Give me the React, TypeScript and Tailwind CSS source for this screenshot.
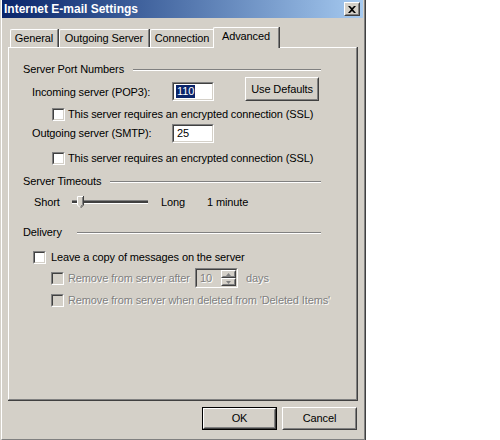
import React from 'react';

const Checkbox: React.FC<{ disabled?: boolean }> = ({ disabled }) => (
  <div className="flex h-[13px] w-[13px] shrink-0 border border-t-[#808080] border-l-[#808080] border-r-white border-b-white">
    <div
      className={`flex-1 border border-t-[#404040] border-l-[#404040] border-r-[#d4d0c8] border-b-[#d4d0c8] ${
        disabled ? 'bg-[#d4d0c8]' : 'bg-white'
      }`}
    />
  </div>
);

const Sunken: React.FC<{ className?: string; children?: React.ReactNode; inner?: string }> = ({ className, children, inner }) => (
  <div className={`flex border border-t-[#808080] border-l-[#808080] border-r-white border-b-white ${className || ''}`}>
    <div className={`flex flex-1 items-center border border-t-[#404040] border-l-[#404040] border-r-[#d4d0c8] border-b-[#d4d0c8] ${inner || 'bg-white'}`}>
      {children}
    </div>
  </div>
);

const Raised: React.FC<{ className?: string; children?: React.ReactNode }> = ({ className, children }) => (
  <div className={`flex border border-t-white border-l-white border-r-[#404040] border-b-[#404040] ${className || ''}`}>
    <div className="flex flex-1 items-center justify-center border border-t-[#d4d0c8] border-l-[#d4d0c8] border-r-[#808080] border-b-[#808080]">
      {children}
    </div>
  </div>
);

const GroupHeader: React.FC<{ label: string; labelWidth: string }> = ({ label, labelWidth }) => (
  <div className="ml-[14px] mr-[35px] flex h-[13px] items-center">
    <span className={`${labelWidth} shrink-0 whitespace-nowrap`}>{label}</span>
    <div className="h-[2px] flex-1 border-t border-t-[#808080] border-b border-b-white" />
  </div>
);

const Dim: React.FC<{ children: React.ReactNode; className?: string }> = ({ children, className }) => (
  <span className={`whitespace-nowrap text-[#808080] [text-shadow:1px_1px_0_#ffffff] ${className || ''}`}>{children}</span>
);

const tabs = ['General', 'Outgoing Server', 'Connection'];
const tabWidths = ['w-[49px]', 'w-[91px]', 'w-[65px]'];

export default function App() {
  return (
    <div className="h-[440px] w-[500px] bg-white font-['Liberation_Sans',Arial,sans-serif] text-[11px] leading-[13px] tracking-[-0.12px] text-black">
      <div className="flex h-[440px] w-[366px] border-r border-r-[#404040] bg-[#d4d0c8] pl-[1px]">
        <div className="flex flex-1 flex-col border-l border-l-white border-r border-r-[#808080] border-b border-b-[#808080]">
          {/* title bar */}
          <div className="mr-[1px] flex h-[18px] items-center bg-gradient-to-r from-[#0a246a] to-[#a6caf0] pl-[2px] pr-[3px]">
            <span className="flex-1 text-[12px] font-bold tracking-[0px] text-white">Internet E-mail Settings</span>
            <Raised className="h-[14px] w-[16px] bg-[#d4d0c8]">
              <svg width="8" height="7" viewBox="0 0 8 7">
                <path d="M0 0h2l2 2 2-2h2L5 3.5 8 7H6L4 5 2 7H0l3-3.5z" fill="#000" />
              </svg>
            </Raised>
          </div>

          {/* tabs */}
          <div className="ml-[8px] mt-[9px] flex h-[20px] items-end">
            {tabs.map((t, i) => (
              <div key={t} className={`${tabWidths[i]} flex h-[18px] rounded-tl-[2px] border-r border-r-[#404040]`}>
                <div className="flex flex-1 items-center justify-center rounded-tl-[2px] border-l border-t border-l-white border-t-white border-r border-r-[#808080] pb-[1px]">
                  {t}
                </div>
              </div>
            ))}
            <div className="relative z-10 -mx-[2px] -mb-[1px] flex h-[21px] w-[67px] rounded-tl-[2px] border-r border-r-[#404040] bg-[#d4d0c8]">
              <div className="flex flex-1 items-start justify-center rounded-tl-[2px] border-l border-t border-l-white border-t-white border-r border-r-[#808080] pt-[2px]">
                Advanced
              </div>
            </div>
          </div>

          {/* panel */}
          <div className="ml-[6px] flex h-[354px] w-[350px] border-r border-b border-r-[#404040] border-b-[#404040]">
            <div className="flex flex-1 flex-col border-l border-t border-l-white border-t-white border-r border-b border-r-[#808080] border-b-[#808080]">
              <div className="mt-[15px]">
                <GroupHeader label="Server Port Numbers" labelWidth="w-[110px]" />
              </div>

              <div className="mt-[1px] flex h-[24px] items-start">
                <span className="ml-[23px] mt-[9px] w-[140px] whitespace-nowrap">Incoming server (POP3):</span>
                <Sunken className="mt-[5px] h-[19px] w-[42px]">
                  <span className="ml-[2px] bg-[#0a246a] px-[1px] text-white">110</span>
                </Sunken>
                <Raised className="ml-[31px] h-[24px] w-[74px]">Use Defaults</Raised>
              </div>

              <div className="ml-[43px] mt-[7px] flex h-[13px] items-center">
                <Checkbox />
                <span className="ml-[3px] whitespace-nowrap">This server requires an encrypted connection (SSL)</span>
              </div>

              <div className="mt-[3px] flex h-[19px] items-start">
                <span className="ml-[23px] mt-[3px] w-[140px] whitespace-nowrap">Outgoing server (SMTP):</span>
                <Sunken className="h-[19px] w-[42px]">
                  <span className="ml-[3px]">25</span>
                </Sunken>
              </div>

              <div className="ml-[43px] mt-[9px] flex h-[13px] items-center">
                <Checkbox />
                <span className="ml-[3px] whitespace-nowrap">This server requires an encrypted connection (SSL)</span>
              </div>

              <div className="mt-[10px]">
                <GroupHeader label="Server Timeouts" labelWidth="w-[87px]" />
              </div>

              <div className="mt-[6px] flex h-[16px] items-center">
                <span className="ml-[25px] w-[36px]">Short</span>
                <svg width="80" height="16" viewBox="0 0 80 16" className="shrink-0">
                  <rect x="2" y="6" width="76" height="1" fill="#808080" />
                  <rect x="2" y="7" width="76" height="2" fill="#404040" />
                  <rect x="2" y="9" width="76" height="1" fill="#ffffff" />
                  <polygon points="7.5,2.5 13.5,2.5 13.5,11 10.5,14 7.5,11" fill="#d4d0c8" />
                  <polyline points="7.5,11 7.5,2.5 13,2.5" fill="none" stroke="#ffffff" strokeWidth="1" />
                  <polyline points="13.5,2 13.5,11 10.5,14" fill="none" stroke="#404040" strokeWidth="1" />
                  <polyline points="12.5,3 12.5,10.5 10.5,12.5" fill="none" stroke="#808080" strokeWidth="1" />
                  <line x1="7.5" y1="11" x2="10" y2="13.5" stroke="#ffffff" strokeWidth="1" />
                </svg>
                <span className="ml-[11px] w-[46px]">Long</span>
                <span>1 minute</span>
              </div>

              <div className="mt-[16px]">
                <GroupHeader label="Delivery" labelWidth="w-[54px]" />
              </div>

              <div className="ml-[24px] mt-[12px] flex h-[13px] items-center">
                <Checkbox />
                <span className="ml-[5px] whitespace-nowrap">Leave a copy of messages on the server</span>
              </div>

              <div className="ml-[42px] mt-[4px] flex h-[20px] items-center">
                <Checkbox disabled />
                <Dim className="ml-[4px] w-[127px]">Remove from server after</Dim>
                <Sunken className="h-[20px] w-[43px]" inner="bg-[#d4d0c8]">
                  <Dim className="ml-[3px] flex-1">10</Dim>
                  <div className="flex h-full w-[15px] flex-col">
                    <Raised className="flex-1">
                      <svg width="5" height="3" viewBox="0 0 5 3">
                        <path d="M2.5 0L5 3H0z" fill="#808080" />
                      </svg>
                    </Raised>
                    <Raised className="flex-1">
                      <svg width="5" height="3" viewBox="0 0 5 3">
                        <path d="M0 0h5L2.5 3z" fill="#808080" />
                      </svg>
                    </Raised>
                  </div>
                </Sunken>
                <Dim className="ml-[8px]">days</Dim>
              </div>

              <div className="ml-[42px] mt-[6px] flex h-[13px] items-center">
                <Checkbox disabled />
                <Dim className="ml-[4px]">Remove from server when deleted from 'Deleted Items'</Dim>
              </div>
            </div>
          </div>

          {/* buttons */}
          <div className="mt-[6px] flex justify-end gap-[5px] pr-[7px]">
            <div className="flex h-[23px] w-[75px] border border-black">
              <Raised className="flex-1">OK</Raised>
            </div>
            <Raised className="h-[23px] w-[75px]">Cancel</Raised>
          </div>
        </div>
      </div>
    </div>
  );
}
